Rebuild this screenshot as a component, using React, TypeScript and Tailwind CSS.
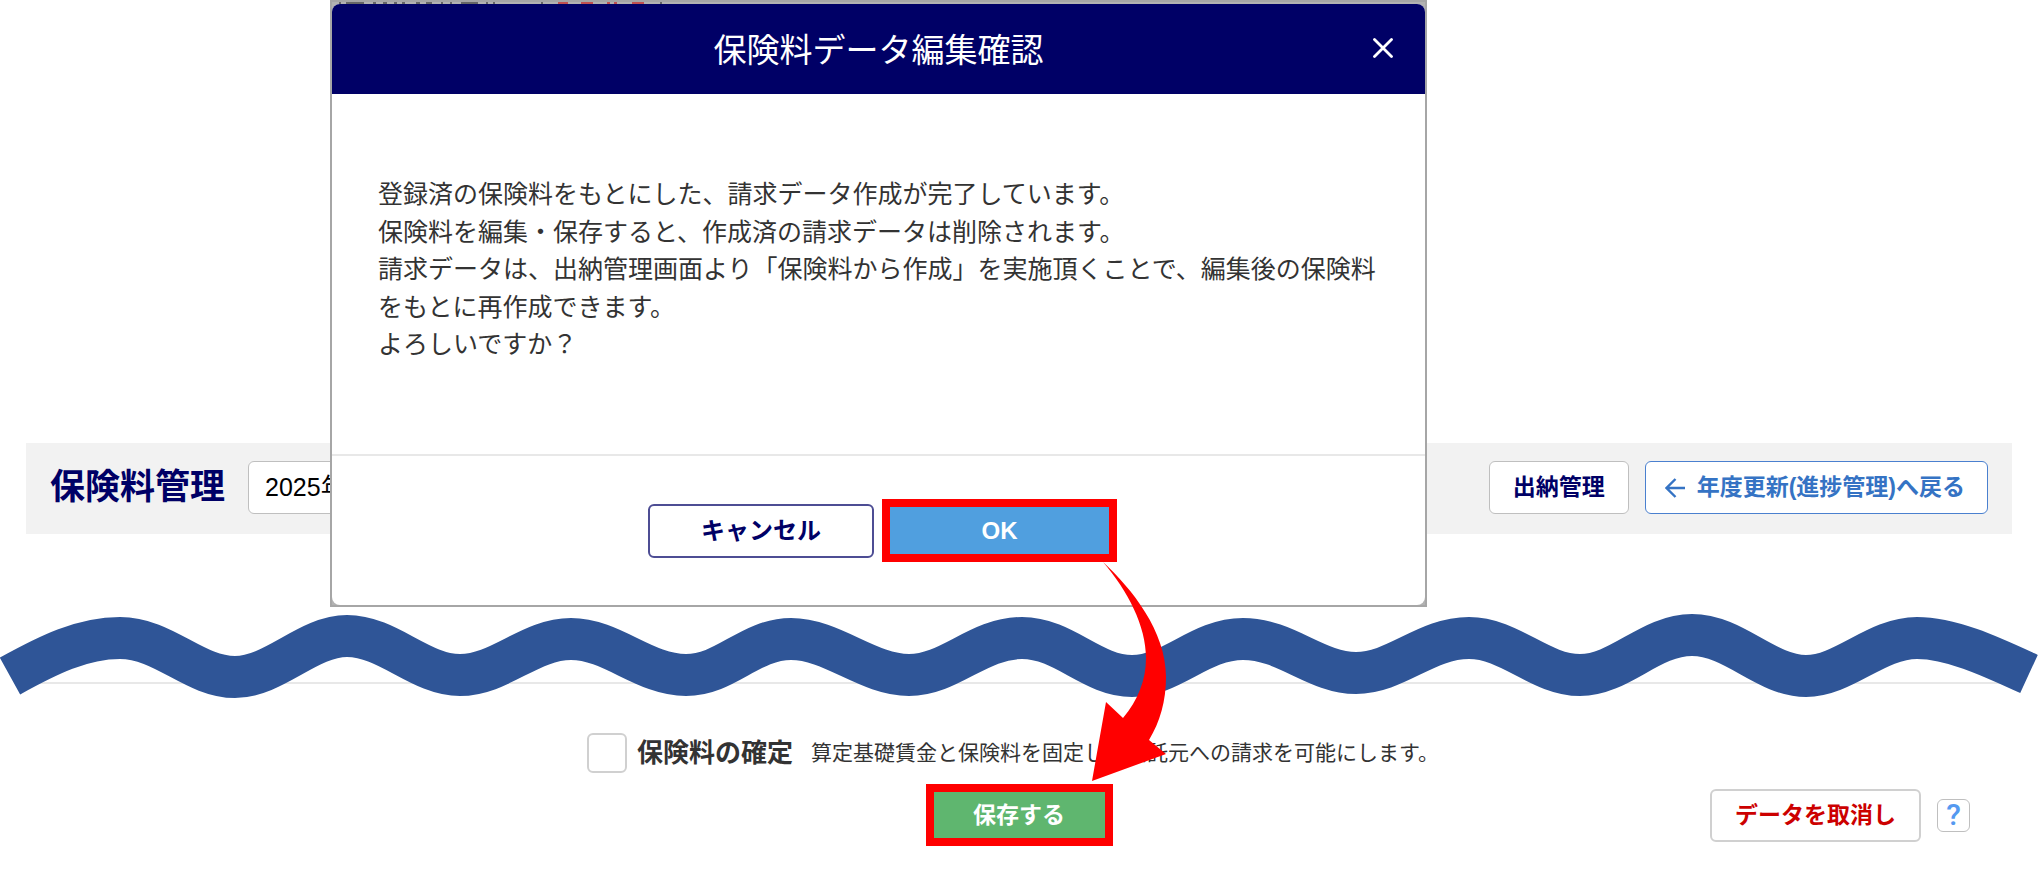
import { useState } from "react";

const bodyLines = [
  "登録済の保険料をもとにした、請求データ作成が完了しています。",
  "保険料を編集・保存すると、作成済の請求データは削除されます。",
  "請求データは、出納管理画面より「保険料から作成」を実施頂くことで、編集後の保険料をもとに再作成できます。",
  "よろしいですか？",
];

// tops of the page text that peek out above the dialog
const peeks = [
  { x: 13, w: 2 },
  { x: 20, w: 18 },
  { x: 47, w: 3 },
  { x: 57, w: 4 },
  { x: 68, w: 3 },
  { x: 76, w: 3 },
  { x: 90, w: 4 },
  { x: 100, w: 6 },
  { x: 115, w: 2 },
  { x: 124, w: 2 },
  { x: 135, w: 17 },
  { x: 160, w: 2 },
  { x: 167, w: 2 },
  { x: 215, w: 2 },
  { x: 232, w: 10, red: true },
  { x: 255, w: 12, red: true },
  { x: 281, w: 3, red: true },
  { x: 288, w: 3, red: true },
  { x: 306, w: 12, red: true },
  { x: 334, w: 2 },
];

const CloseIcon = () => (
  <svg className="h-5 w-5" viewBox="0 0 20 20" fill="none" aria-hidden="true">
    <path
      d="M1.5 1.5 18.5 18.5M18.5 1.5 1.5 18.5"
      stroke="currentColor"
      strokeWidth="2.8"
      strokeLinecap="round"
    />
  </svg>
);

const BackIcon = () => (
  <svg className="h-5 w-5" viewBox="0 0 20 20" fill="none" aria-hidden="true">
    <path
      d="M10.5 1 1.5 10l9 9M1.5 10H20"
      stroke="currentColor"
      strokeWidth="2.4"
    />
  </svg>
);

const Wave = () => (
  <svg
    className="absolute top-[612px] left-0 h-[90px] w-full"
    viewBox="0 0 2038 90"
    preserveAspectRatio="none"
    fill="none"
    aria-hidden="true"
  >
    <path
      d="M10 64C48 43 82 26 120 26C164 26 194 65 235 65C274 65 308 24 347 24C388 24 420 63 460 63C500 63 530 27 571 27C612 27 644 63 686 63C726 63 750 27 791 27C832 27 868 63 909 63C950 63 978 26 1022 26C1064 26 1092 64 1132 64C1172 64 1200 27 1243 27C1286 27 1316 61 1356 61C1396 61 1426 26 1469 26C1510 26 1540 63 1580 63C1620 63 1650 23 1692 23C1734 23 1766 64 1806 64C1844 64 1876 26 1917 26C1952 26 1992 45 2029 62"
      stroke="#2f5597"
      strokeWidth="42"
    />
  </svg>
);

const Arrow = () => (
  <svg
    className="absolute top-[560px] left-[1090px] h-[224px] w-[80px]"
    viewBox="0 0 80 224"
    aria-hidden="true"
  >
    <path
      d="M13 2C42 29 76 71 76 117C76 141 70 162 59 180L76 194L2 221L16 142L33 158C48 140 56 120 56 98C56 66 38 31 13 2Z"
      fill="#ff0000"
    />
  </svg>
);

type DialogProps = {
  onClose: () => void;
};

const ConfirmDialog = ({ onClose }: DialogProps) => (
  <div
    role="dialog"
    aria-labelledby="dialog-title"
    className="absolute top-0 left-[330px] w-[1097px] border-2 border-[#a6a6a6] bg-[#b2b2b2]"
  >
    <svg className="block h-[2px] w-[360px]" viewBox="0 0 360 2" aria-hidden="true">
      {peeks.map((p) => (
        <rect
          key={p.x}
          x={p.x - 6}
          y="0"
          width={p.w}
          height="2"
          fill={p.red ? "#c05050" : "#666666"}
        />
      ))}
    </svg>
    <div className="overflow-hidden rounded-lg bg-white">
      <header className="relative flex h-[90px] items-center justify-center bg-[#000066] pt-1 text-white">
        <h2 id="dialog-title" className="text-[33px]">
          保険料データ編集確認
        </h2>
        <button
          type="button"
          aria-label="閉じる"
          onClick={onClose}
          className="absolute top-[34px] right-8"
        >
          <CloseIcon />
        </button>
      </header>
      <div className="h-[360px] px-[46px] pt-[82px] text-[25px] leading-normal text-[#333333]">
        {bodyLines.map((line) => (
          <p key={line}>{line}</p>
        ))}
      </div>
      <footer className="flex h-[151px] items-center justify-center gap-2 border-t-2 border-[#e8e8e8] pl-2 text-2xl font-bold">
        <button
          type="button"
          onClick={onClose}
          className="h-[54px] w-[226px] rounded-md border-2 border-[#4d4d94] text-[#000066]"
        >
          キャンセル
        </button>
        <button
          type="button"
          onClick={onClose}
          className="h-[63px] w-[235px] border-8 border-[#ff0000] bg-[#509fdf] text-white"
        >
          OK
        </button>
      </footer>
    </div>
  </div>
);

const App = () => {
  const [isOpen, setIsOpen] = useState(true);

  return (
    <div className="relative min-h-screen bg-white px-[26px] pt-[443px] font-['Liberation_Sans','Noto_Sans_CJK_JP',sans-serif]">
      <header className="flex h-[91px] items-center bg-[#f2f2f2] px-6 pb-[2px]">
        <h1 className="text-[35px] font-bold text-[#000066]">保険料管理</h1>
        <select
          aria-label="年度"
          className="ml-[23px] h-[53px] w-[180px] appearance-none rounded-md border border-[#bfbfbf] bg-white px-4 text-[25px] text-black"
        >
          <option>2025年度</option>
        </select>
        <nav className="ml-auto flex gap-4 text-[23px] font-bold">
          <a
            href="#cashier"
            className="flex h-[53px] items-center rounded-md border border-[#bfbfbf] bg-white px-[23px] text-[#000066]"
          >
            出納管理
          </a>
          <a
            href="#progress"
            className="flex h-[53px] items-center gap-3 rounded-md border border-[#4a80cf] bg-white pr-[22px] pl-[19px] text-[#3573c4]"
          >
            <BackIcon />
            年度更新(進捗管理)へ戻る
          </a>
        </nav>
      </header>

      <hr className="mt-[148px] border-t-2 border-[#e8e8e8]" />

      <div className="mt-[49px] flex items-center justify-center text-[#333333]">
        <input
          id="confirm"
          type="checkbox"
          className="h-10 w-10 appearance-none rounded-md border-2 border-[#d0d0d0] bg-white"
        />
        <label htmlFor="confirm" className="ml-[10px] text-[26px] leading-10 font-bold">
          保険料の確定
        </label>
        <span className="ml-[18px] w-[640px] text-[21px] leading-10">
          算定基礎賃金と保険料を固定し、委託元への請求を可能にします。
        </span>
      </div>

      <div className="mt-[11px] grid grid-cols-[1fr_auto_1fr] items-center text-[23px] font-bold">
        <button
          type="button"
          onClick={() => setIsOpen(true)}
          className="col-start-2 h-[62px] w-[187px] border-8 border-[#ff0000] bg-[#5fb66f] text-white"
        >
          保存する
        </button>
        <div className="mr-[42px] flex items-center gap-4 justify-self-end">
          <button
            type="button"
            className="h-[53px] rounded-md border-2 border-[#d0d0d0] bg-white px-[23px] text-[#cc0000]"
          >
            データを取消し
          </button>
          <button
            type="button"
            aria-label="ヘルプ"
            className="flex h-[33px] w-[33px] items-center justify-center rounded-md border border-[#bfbfbf] bg-white font-['Roboto',sans-serif] text-3xl font-medium text-[#5599f0]"
          >
            ?
          </button>
        </div>
      </div>

      <Wave />
      {isOpen && <ConfirmDialog onClose={() => setIsOpen(false)} />}
      <Arrow />
    </div>
  );
};

export default App;
